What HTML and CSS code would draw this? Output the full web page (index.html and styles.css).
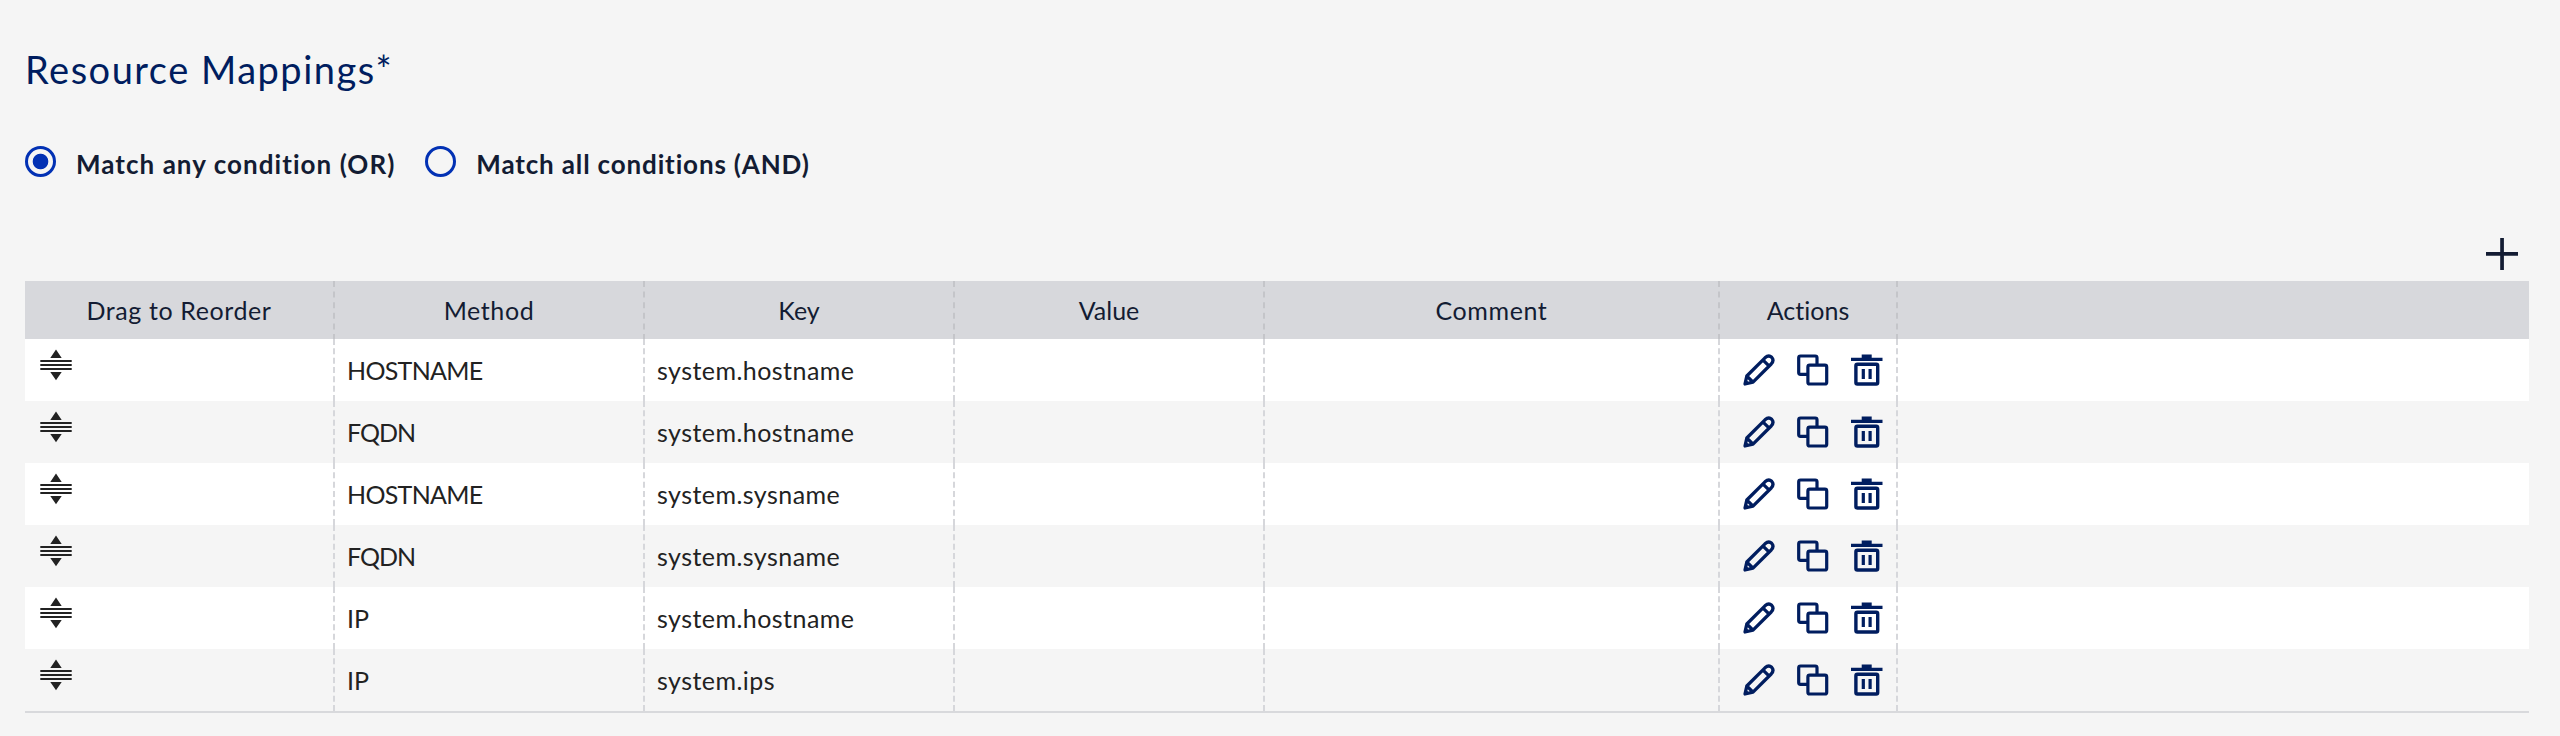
FILE: index.html
```
<!DOCTYPE html>
<html lang="en">
<head>
<meta charset="utf-8">
<title>Resource Mappings</title>
<link rel="stylesheet" href="styles.css">
</head>
<body>
<svg class="sprite" aria-hidden="true">
  <symbol id="drag" viewBox="0 0 32 32"><path d="M16 .4 21.7 9H10.300zM16 31.300 10.300 23H21.700z"/><path d="M.3 11h31.400v2H.3zM.3 15h31.400v2H.3zM.3 19h31.400v2H.3z"/></symbol>
  <symbol id="edit" viewBox="0 0 32 32"><path d="M2 30 3.800 22 22 3.800Q25.700.5 28.700 3.300Q31.500 6.300 28.200 10L10 28.200ZM19.800 5.800 26.200 12.200M3.800 22 10 28.200" fill="none" stroke="currentColor" stroke-width="3.300" stroke-linejoin="round"/><path d="M1.500 30.500 2.700 25.300 6.700 29.300z"/></symbol>
  <symbol id="copy" viewBox="0 0 32 32"><g fill="none" stroke="currentColor" stroke-width="3.200"><rect x="10.900" y="11.200" width="18.800" height="18.800" rx="1.800"/><path d="M11 20.300H3.500Q1.700 20.300 1.700 18.500V3.800Q1.700 2 3.500 2H18.200Q20 2 20 3.800V11"/></g></symbol>
  <symbol id="trash" viewBox="0 0 32 32"><path d="M0 3.700H10.700V.4H20.700V3.700H31.500V7H0zM10.700 15h3.200v10H10.700zM17.500 15h3.200v10h-3.200z"/><rect x="4.900" y="10.200" width="21.800" height="19.800" rx="1.500" fill="none" stroke="currentColor" stroke-width="3.400"/></symbol>
</svg>
<main class="panel">
  <h1 class="title">Resource Mappings*</h1>
  <div class="radios">
    <label class="radio"><span class="dot dot-on"></span><span class="radio-or">Match any condition (OR)</span></label>
    <label class="radio"><span class="dot"></span><span class="radio-and">Match all conditions (AND)</span></label>
  </div>
  <div class="toolbar"><svg class="plus" viewBox="0 0 32 32"><path d="M14.200 0h3.700v32h-3.700zM0 14h32v3.700H0z"/></svg></div>
  <div class="table">
    <div class="row head"><div class="wide">Drag to Reorder</div><div class="wide">Method</div><div>Key</div><div>Value</div><div class="wide">Comment</div><div>Actions</div><div></div></div>
    <div class="row"><div class="handle"><svg><use href="#drag"/></svg></div><div class="host">HOSTNAME</div><div class="key">system.hostname</div><div></div><div></div><div class="actions"><svg><use href="#edit"/></svg><svg><use href="#copy"/></svg><svg><use href="#trash"/></svg></div><div></div></div>
    <div class="row"><div class="handle"><svg><use href="#drag"/></svg></div><div class="fqdn">FQDN</div><div class="key">system.hostname</div><div></div><div></div><div class="actions"><svg><use href="#edit"/></svg><svg><use href="#copy"/></svg><svg><use href="#trash"/></svg></div><div></div></div>
    <div class="row"><div class="handle"><svg><use href="#drag"/></svg></div><div class="host">HOSTNAME</div><div class="key">system.sysname</div><div></div><div></div><div class="actions"><svg><use href="#edit"/></svg><svg><use href="#copy"/></svg><svg><use href="#trash"/></svg></div><div></div></div>
    <div class="row"><div class="handle"><svg><use href="#drag"/></svg></div><div class="fqdn">FQDN</div><div class="key">system.sysname</div><div></div><div></div><div class="actions"><svg><use href="#edit"/></svg><svg><use href="#copy"/></svg><svg><use href="#trash"/></svg></div><div></div></div>
    <div class="row"><div class="handle"><svg><use href="#drag"/></svg></div><div>IP</div><div class="key">system.hostname</div><div></div><div></div><div class="actions"><svg><use href="#edit"/></svg><svg><use href="#copy"/></svg><svg><use href="#trash"/></svg></div><div></div></div>
    <div class="row"><div class="handle"><svg><use href="#drag"/></svg></div><div>IP</div><div class="key">system.ips</div><div></div><div></div><div class="actions"><svg><use href="#edit"/></svg><svg><use href="#copy"/></svg><svg><use href="#trash"/></svg></div><div></div></div>
  </div>
</main>
</body>
</html>
```
FILE: styles.css
```
* { box-sizing: border-box; }
body { margin: 0; background: #f5f5f5; color: #222; font-family: Lato, "Open Sans", sans-serif; font-size: 25px; font-variant-ligatures: none; }
svg { display: block; fill: currentColor; }
.sprite { display: none; }
.panel { height: 736px; padding: 46px 31px 0 25px; }
.title { margin: 0; height: 48px; line-height: 47px; font-size: 38px; font-weight: 400; color: #001d5f; letter-spacing: 1.5px; }
.radios { display: flex; gap: 30px; height: 40px; margin-top: 49px; }
.radio { display: flex; gap: 20px; line-height: 43px; font-size: 26px; font-weight: 700; color: #131c33; white-space: nowrap; }
.radio-or { letter-spacing: 1.05px; }
.radio-and { letter-spacing: .85px; }
.dot { width: 31px; height: 31px; margin-top: 3px; border: 3px solid #0231b4; border-radius: 50%; }
.dot-on { background: radial-gradient(circle, #0231b4 7.400px, transparent 8.200px); }
.toolbar { display: flex; justify-content: flex-end; height: 98px; padding: 55px 11px 0 0; color: #131c33; }
.plus { width: 32px; height: 32px; }
.table { border-bottom: 2px solid #d8d9dc; }
.row { display: grid; grid-template-columns: 310px 310px 310px 310px 455px 178px 1fr; height: 62px; line-height: 62px; background: #f5f5f5; }
.row:nth-child(even) { background: #fff; }
.row > div { border-right: 2px dashed #d6d7db; padding-left: 12px; white-space: nowrap; }
.row > div:last-child { border-right: 0; }
.row.head { height: 58px; line-height: 59px; background: #d7d8dc; color: #131c33; text-align: center; }
.row.head > div { padding: 0; border-color: #c4c5c9; }
.wide { letter-spacing: .6px; }
.key { letter-spacing: .45px; }
.host { letter-spacing: -.7px; }
.fqdn { letter-spacing: -1px; }
.row > .handle { padding: 10px 0 0 15px; color: #222; }
.handle svg, .actions svg { width: 32px; height: 32px; }
.row > .actions { display: flex; gap: 22px; padding: 15px 0 0 23px; color: #001d5f; }
```
